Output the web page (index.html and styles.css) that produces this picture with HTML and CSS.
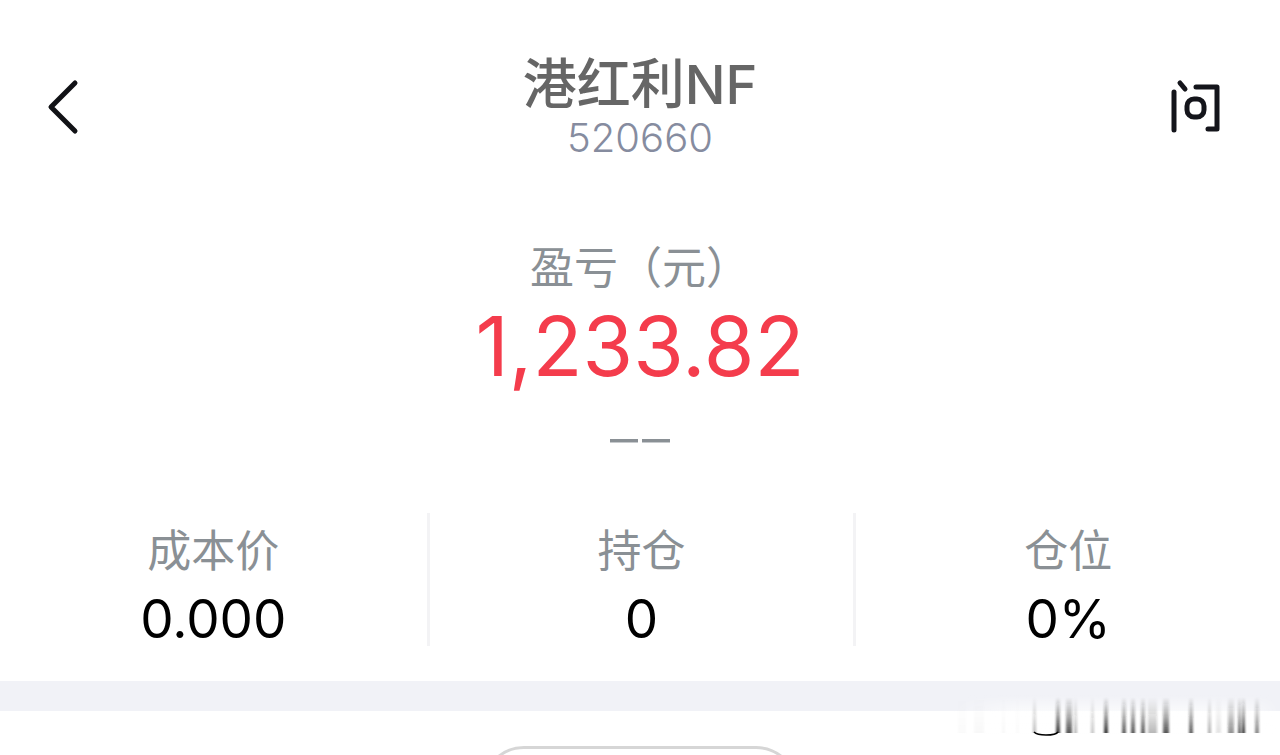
FILE: index.html
```html
<!DOCTYPE html>
<html lang="zh-CN">
<head>
    <meta charset="UTF-8">
    <meta name="viewport" content="width=device-width, initial-scale=1.0">
    <title>港红利NF 520660</title>
    <link rel="stylesheet" href="styles.css">
</head>
<body>

    <header class="top-bar">
        <button class="icon-btn" type="button" aria-label="返回">
            <svg width="60" height="60" viewBox="0 0 60 60" fill="none" stroke="#111216" stroke-width="5" stroke-linecap="round" stroke-linejoin="round">
                <path d="M35 6 L11 30 L35 54"/>
            </svg>
        </button>
        <div class="stock">
            <h1 class="stock-name">港红利NF</h1>
            <div class="stock-code">520660</div>
        </div>
        <button class="icon-btn" type="button" aria-label="问">
            <svg width="60" height="60" viewBox="0 0 60 60" fill="none" stroke="#14151b" stroke-width="5" stroke-linecap="round" stroke-linejoin="round">
                <path d="M14 15 V53"/>
                <path d="M20 6 L25 12"/>
                <path d="M36 10 H57 V52 H48"/>
                <rect x="27" y="22" width="17" height="18" rx="7"/>
            </svg>
        </button>
    </header>

    <main>
        <section class="profit">
            <h2 class="label">盈亏（元）</h2>
            <div class="profit-value">1,233.82</div>
            <div class="profit-rate"><span>–</span><span>–</span></div>
        </section>

        <dl class="stats">
            <div class="stat">
                <dt class="label">成本价</dt>
                <dd class="stat-value">0.000</dd>
            </div>
            <div class="stat">
                <dt class="label">持仓</dt>
                <dd class="stat-value">0</dd>
            </div>
            <div class="stat">
                <dt class="label">仓位</dt>
                <dd class="stat-value">0%</dd>
            </div>
        </dl>
    </main>

    <footer class="bottom">
        <div class="sheet">
            <div class="pill"></div>
        </div>
        <!-- faded streaks over the corner -->
        <svg class="streaks" width="330" height="44" viewBox="0 0 330 44" aria-hidden="true">
            <defs>
                <linearGradient id="fade" x1="0" y1="0" x2="0" y2="1">
                    <stop offset="0" stop-color="#222" stop-opacity="0"/>
                    <stop offset="0.5" stop-color="#222" stop-opacity="0.4"/>
                    <stop offset="1" stop-color="#222" stop-opacity="0.9"/>
                </linearGradient>
                <linearGradient id="wash" x1="0" y1="0" x2="0" y2="1">
                    <stop offset="0" stop-color="#fff" stop-opacity="0"/>
                    <stop offset="0.6" stop-color="#fff" stop-opacity="0.9"/>
                    <stop offset="1" stop-color="#fff"/>
                </linearGradient>
                <linearGradient id="edge">
                    <stop offset="0" stop-color="#fff" stop-opacity="0"/>
                    <stop offset="0.2" stop-color="#fff"/>
                    <stop offset="0.9" stop-color="#fff"/>
                    <stop offset="1" stop-color="#fff" stop-opacity="0"/>
                </linearGradient>
                <mask id="sides"><rect width="330" height="44" fill="url(#edge)"/></mask>
                <filter id="soft" x="-5%" width="110%"><feGaussianBlur stdDeviation="0.8 0.1"/></filter>
            </defs>
            <rect width="330" height="40" fill="url(#wash)" mask="url(#sides)"/>
            <g fill="url(#fade)" filter="url(#soft)">
                <rect x="8" y="2" width="8" height="36" opacity="0.02"/>
                <rect x="24" y="2" width="10" height="36" opacity="0.03"/>
                <rect x="52" y="2" width="3" height="36" opacity="0.03"/>
                <rect x="66" y="2" width="3" height="36" opacity="0.02"/>
                <rect x="83" y="2" width="3" height="36" opacity="0.35"/>
                <rect x="106" y="2" width="4" height="36"/>
                <rect x="116" y="2" width="6" height="36" opacity="0.85"/>
                <rect x="124" y="2" width="3" height="36" opacity="0.35"/>
                <rect x="141" y="2" width="3" height="36" opacity="0.3"/>
                <rect x="154" y="2" width="4" height="36"/>
                <rect x="172" y="2" width="4" height="36" opacity="0.8"/>
                <rect x="181" y="2" width="4" height="36" opacity="0.85"/>
                <rect x="191" y="2" width="4" height="36" opacity="0.8"/>
                <rect x="198" y="2" width="9" height="36" opacity="0.35"/>
                <rect x="213" y="2" width="6" height="36" opacity="0.85"/>
                <rect x="239" y="2" width="4" height="36" opacity="0.8"/>
                <rect x="258" y="2" width="3" height="36" opacity="0.4"/>
                <rect x="266" y="2" width="5" height="36" opacity="0.12"/>
                <rect x="278" y="2" width="6" height="36" opacity="0.55"/>
                <rect x="288" y="2" width="3" height="36" opacity="0.8"/>
                <rect x="292" y="2" width="3" height="36"/>
                <rect x="305" y="2" width="4" height="36" opacity="0.6"/>
            </g>
            <path d="M84 37 Q87 40 96 40 Q106 40 108 37" fill="none" stroke="#000" stroke-width="1.5"/>
        </svg>
    </footer>

</body>
</html>
```

FILE: styles.css
```css
* {
    box-sizing: border-box;
}
body {
    display: flex;
    flex-direction: column;
    height: 100vh;
    margin: 0;
    overflow: hidden;
    font-family: Inter, "Noto Sans CJK SC", sans-serif;
    text-align: center;
    background-color: #fff;
}
h1, h2, dl, dd {
    margin: 0;
}
.top-bar {
    display: flex;
    justify-content: space-between;
    align-items: center;
    padding: 54px 40px 0;
}
.icon-btn {
    width: 80px;
    height: 60px;
    padding: 0;
    border: none;
    background: none;
    cursor: pointer;
}
.icon-btn svg {
    display: block;
}
.stock-name {
    font-size: 54px;
    font-weight: 500;
    line-height: 62px;
    color: #666;
}
.stock-code {
    font-size: 40px;
    font-weight: 300;
    line-height: 44px;
    color: #868c9f;
}
.profit {
    padding-top: 76px;
}
.label {
    font-size: 44px;
    font-weight: 400;
    line-height: 64px;
    color: #8a9095;
}
.profit-value {
    font-size: 82px;
    line-height: 94px;
    color: #f43c4c;
}
.profit-rate {
    display: flex;
    justify-content: center;
    gap: 4px;
    font-size: 56px;
    font-weight: 300;
    line-height: 88px;
    color: #8a9095;
}
.stats {
    display: grid;
    grid-template-columns: repeat(3, 1fr);
    padding: 31px 0 35px;
}
.stat {
    height: 133px;
    padding-top: 6px;
}
.stat + .stat {
    border-left: 3px solid #f3f3f5;
}
.stat-value {
    font-size: 53px;
    line-height: 72px;
    color: #000;
}
.bottom {
    position: relative;
    display: flex;
    flex: 1;
    min-height: 0;
    border-top: 30px solid #f1f2f7;
}
.sheet {
    flex: 1;
    padding-top: 35px;
    overflow: hidden;
}
.pill {
    width: 316px;
    height: 84px;
    margin: 0 auto;
    border: 3px solid #d6d6d6;
    border-radius: 42px;
}
.streaks {
    position: absolute;
    top: -16px;
    right: 0;
}
```
